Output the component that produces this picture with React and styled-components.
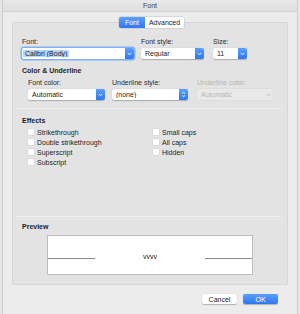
import React from "react";
import styled, { createGlobalStyle } from "styled-components";

const Global = createGlobalStyle`
  html, body {
    margin: 0;
    background: #e6e6e6;
  }
  * {
    box-sizing: border-box;
  }
`;

const Window = styled.div`
  width: 296px;
  height: 314px;
  margin-left: 2px;
  border-left: 1px solid #cdcdcd;
  border-right: 1px solid #cdcdcd;
  background: #ececec;
  font-family: "Liberation Sans", Arial, sans-serif;
  font-size: 7px;
  color: #1e1e1e;
  display: flex;
  flex-direction: column;
`;

const TitleBar = styled.div`
  height: 12px;
  background: linear-gradient(#e9e9e9, #dedede);
  border-bottom: 1px solid #d2d2d2;
  display: flex;
  align-items: center;
  justify-content: center;
  font-size: 7px;
  color: #444;
`;

const Body = styled.div`
  padding: 10px 9px 0 9px;
  display: flex;
  flex-direction: column;
`;

const Pane = styled.div`
  height: 263px;
  background: #e3e3e3;
  border: 1px solid #d6d6d6;
  border-radius: 2px;
  display: flex;
  flex-direction: column;
`;

const Tabs = styled.div`
  display: flex;
  align-self: center;
  margin-top: -6px;
  margin-left: 3px;
  border-radius: 2px;
  box-shadow: 0 0 0 0.5px #c4c4c4;
`;

const Tab = styled.div`
  height: 11px;
  padding: 0 ${(p) => (p.$active ? 6 : 4)}px;
  display: flex;
  align-items: center;
  font-size: 7px;
  color: ${(p) => (p.$active ? "#fff" : "#222")};
  background: ${(p) => (p.$active ? "linear-gradient(#5aa0fb, #2d78f0)" : "#fff")};
  border-radius: ${(p) => (p.$active ? "2px 0 0 2px" : "0 2px 2px 0")};
`;

const Content = styled.div`
  padding: ${(p) => p.$pt ?? 9}px 0 0 9px;
  display: flex;
  flex-direction: column;
`;

const Row = styled.div`
  display: flex;
  gap: ${(p) => p.$gap || 0}px;
  padding-left: ${(p) => p.$indent || 0}px;
`;

const Field = styled.div`
  display: flex;
  flex-direction: column;
  width: ${(p) => p.$w}px;
  margin-right: ${(p) => p.$mr || 0}px;
`;

const Label = styled.div`
  height: 11px;
  line-height: 10px;
  color: ${(p) => (p.$disabled ? "#b5b5b5" : "#2a2a2a")};
`;

const Heading = styled.div`
  font-weight: bold;
  line-height: 10px;
  height: 10px;
  margin-top: ${(p) => p.$mt || 0}px;
  margin-bottom: ${(p) => p.$mb || 0}px;
`;

const Box = styled.div`
  height: 11px;
  display: flex;
  align-items: center;
  background: ${(p) => (p.$disabled ? "#e9e9e9" : "#fff")};
  border-radius: 2px;
  box-shadow: ${(p) =>
    p.$focus ? "0 0 0 1.5px #7fb2f5" : p.$disabled ? "0 0 0 0.5px #d8d8d8" : "0 0.5px 1px rgba(0,0,0,0.25)"};
  color: ${(p) => (p.$disabled ? "#b8b8b8" : "#222")};
`;

const BoxText = styled.span`
  flex: 1;
  padding-left: ${(p) => (p.$sel ? 1 : 4)}px;
  white-space: nowrap;
  overflow: hidden;
`;

const Selected = styled.span`
  background: #b4d5fe;
  padding: 0 2px 1px 2px;
`;

const Arrow = styled.div`
  width: 9px;
  height: 11px;
  border-radius: 0 2px 2px 0;
  background: ${(p) => (p.$plain ? "transparent" : "linear-gradient(#5aa0fb, #2d78f0)")};
  display: flex;
  align-items: center;
  justify-content: center;
`;

const Separator = styled.div`
  height: 1px;
  background: #d0d0d0;
  border-bottom: 1px solid #efefef;
  margin: ${(p) => p.$m};
`;

const Checks = styled.div`
  display: grid;
  grid-template-columns: 125px 1fr;
  padding-left: 6px;
  margin-top: 1px;
`;

const Column = styled.div`
  display: flex;
  flex-direction: column;
`;

const CheckRow = styled.div`
  height: 10px;
  display: flex;
  align-items: center;
  gap: 3px;
`;

const CheckBox = styled.span`
  width: 6px;
  height: 6px;
  background: #fff;
  border-radius: 1px;
  box-shadow: 0 0 0 0.5px #cfcfcf;
`;

const Preview = styled.div`
  margin: 0 34px 0 34px;
  width: 206px;
  height: 40px;
  background: #fff;
  border: 1px solid #bdbdbd;
  display: flex;
  align-items: center;
  padding-top: 3px;
`;

const Rule = styled.div`
  width: 47px;
  height: 1px;
  background: #8a8a8a;
  margin-top: 3px;
`;

const Sample = styled.div`
  flex: 1;
  text-align: center;
  font-size: 7px;
  color: #222;
`;

const Footer = styled.div`
  display: flex;
  justify-content: flex-end;
  gap: 6px;
  padding: 9px 10px 0 0;
`;

const Button = styled.div`
  width: ${(p) => p.$w}px;
  height: 10px;
  border-radius: 2px;
  display: flex;
  align-items: center;
  justify-content: center;
  font-size: 7px;
  color: ${(p) => (p.$primary ? "#fff" : "#222")};
  background: ${(p) => (p.$primary ? "linear-gradient(#5aa0fb, #2d78f0)" : "#fff")};
  box-shadow: 0 0.5px 1px rgba(0,0,0,0.25);
`;

const Chevron = ({ color = "#fff", double }) =>
  double ? (
    <svg width="5" height="7" viewBox="0 0 5 7">
      <path d="M1 2.6 L2.5 1.2 L4 2.6 M1 4.4 L2.5 5.8 L4 4.4" fill="none" stroke={color} strokeWidth="0.9" />
    </svg>
  ) : (
    <svg width="5" height="4" viewBox="0 0 5 4">
      <path d="M0.8 1 L2.5 2.8 L4.2 1" fill="none" stroke={color} strokeWidth="0.9" />
    </svg>
  );

const Select = ({ value, sel, focus, disabled, double }) => (
  <Box $focus={focus} $disabled={disabled}>
    <BoxText $sel={sel}>{sel ? <Selected>{value}</Selected> : value}</BoxText>
    <Arrow $plain={disabled}>
      <Chevron color={disabled ? "#b8b8b8" : "#fff"} double={double} />
    </Arrow>
  </Box>
);

const left = ["Strikethrough", "Double strikethrough", "Superscript", "Subscript"];
const right = ["Small caps", "All caps", "Hidden"];

export default function App() {
  return (
    <>
      <Global />
      <Window>
        <TitleBar>Font</TitleBar>
        <Body>
          <Pane>
            <Tabs>
              <Tab $active>Font</Tab>
              <Tab>Advanced</Tab>
            </Tabs>
            <Content>
              <Row>
                <Field $w={112} $mr={7}>
                  <Label>Font:</Label>
                  <Select value="Calibri (Body)" sel focus />
                </Field>
                <Field $w={63} $mr={9}>
                  <Label>Font style:</Label>
                  <Select value="Regular" />
                </Field>
                <Field $w={34}>
                  <Label>Size:</Label>
                  <Select value="11" />
                </Field>
              </Row>
              <Heading $mt={7} $mb={2}>Color &amp; Underline</Heading>
              <Row $indent={6} $gap={7}>
                <Field $w={77}>
                  <Label>Font color:</Label>
                  <Select value="Automatic" />
                </Field>
                <Field $w={76} $mr={2}>
                  <Label>Underline style:</Label>
                  <Select value="(none)" double />
                </Field>
                <Field $w={76}>
                  <Label $disabled>Underline color:</Label>
                  <Select value="Automatic" disabled />
                </Field>
              </Row>
            </Content>
            <Separator $m="8px 6px 0 3px" />
            <Content $pt={7}>
              <Heading>Effects</Heading>
              <Checks>
                <Column>
                  {left.map((t) => (
                    <CheckRow key={t}>
                      <CheckBox />
                      {t}
                    </CheckRow>
                  ))}
                </Column>
                <Column>
                  {right.map((t) => (
                    <CheckRow key={t}>
                      <CheckBox />
                      {t}
                    </CheckRow>
                  ))}
                </Column>
              </Checks>
            </Content>
            <Separator $m="49px 6px 0 3px" />
            <Content $pt={5}>
              <Heading $mb={3}>Preview</Heading>
            </Content>
            <Preview>
              <Rule />
              <Sample>vvvv</Sample>
              <Rule />
            </Preview>
          </Pane>
          <Footer>
            <Button $w={35}>Cancel</Button>
            <Button $w={35} $primary>OK</Button>
          </Footer>
        </Body>
      </Window>
    </>
  );
}
